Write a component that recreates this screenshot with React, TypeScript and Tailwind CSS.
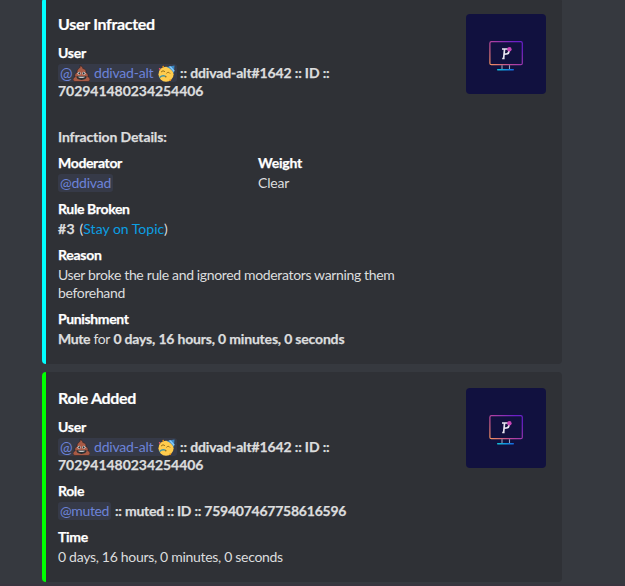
import type { ReactNode } from "react";

function PooEmoji() {
  return (
    <svg viewBox="0 0 36 36" className="block h-[17px] w-[17px]" aria-hidden="true">
      <path
        fill="#a85a45"
        stroke="#2a2020"
        strokeWidth="1.200"
        d="M31.4 25.1c.4-1 .6-2 .6-3 0-3-2-5.300-5-5.900.3-.8.4-1.600.4-2.400 0-3.500-2.700-5.900-6.500-6.300C20.600 4.500 18 1.500 14.700 1c1.300 3.300-.5 5-3 6.800-2 1.400-3.100 3.300-3.100 5.300 0 1 .2 2 .7 2.900C6 16.400 3.900 19 3.900 22c0 1.100.3 2.200.8 3.200C2 25.900 0 28 0 30.600 0 33.600 2.600 35 6 35h24c3.400 0 6-1.500 6-4.500 0-2.600-1.900-4.800-4.600-5.400z"
      />
      <circle cx="13" cy="17.500" r="3.300" fill="#f5f8fa" />
      <circle cx="23" cy="17.500" r="3.300" fill="#f5f8fa" />
      <circle cx="13.400" cy="17.800" r="2.200" fill="#292f33" />
      <circle cx="22.600" cy="17.800" r="2.200" fill="#292f33" />
      <path fill="#292f33" d="M7 24h22c0 5-4.700 7.500-11 7.500S7 29 7 24z" />
      <path fill="#f5f8fa" d="M11 25h14c0 1.400-3 2.200-7 2.200s-7-.8-7-2.200z" />
    </svg>
  );
}

function PartyEmoji() {
  return (
    <svg viewBox="0 0 36 36" className="block h-[17px] w-[17px]" aria-hidden="true">
      <circle cx="17" cy="19.500" r="16" fill="#ffcc4d" />
      <path fill="#3b88c3" d="M18 4 35 1l-1.500 17C30 10.500 25 6.500 18 4z" />
      <path fill="#88c9f9" d="m23 3.200 4-.7 7.500 8.500-.4 4.500z" />
      <path d="M7 14.500c2-2.600 5-2.800 7-.8M18.500 17c2-2.200 5-2 6.500.3" fill="none" stroke="#8a6414" strokeWidth="2" strokeLinecap="round" />
      <path d="M15 23.500c-4-1.500-8-.5-11 2.500" fill="none" stroke="#3f93a8" strokeWidth="3" strokeLinecap="round" />
      <circle cx="16.500" cy="25" r="1.700" fill="#8a6414" />
      <circle cx="3.500" cy="8" r="1.800" fill="#ea596e" />
      <circle cx="11" cy="3.500" r="1.700" fill="#f4900c" />
      <circle cx="26" cy="32" r="1.800" fill="#f4900c" />
    </svg>
  );
}

function Thumbnail({ id }: { id: string }) {
  return (
    <div className="h-20 w-20 shrink-0 overflow-hidden rounded-[4px] bg-[#11113f]">
      <svg viewBox="0 0 80 80" className="block h-20 w-20" aria-hidden="true">
        <defs>
          <linearGradient id={id + "-screen"} x1="0" y1="1" x2="1" y2="0.300">
            <stop offset="0" stopColor="#f2935c" />
            <stop offset="0.450" stopColor="#b8459c" />
            <stop offset="1" stopColor="#6a1fc9" />
          </linearGradient>
          <linearGradient id={id + "-base"} x1="0" y1="0" x2="1" y2="0">
            <stop offset="0" stopColor="#12c4dc" />
            <stop offset="1" stopColor="#1464e0" />
          </linearGradient>
        </defs>
        <rect x="23.900" y="27.700" width="32.400" height="23" rx="1.500" fill="none" stroke={`url(#${id}-screen)`} strokeWidth="1.200" />
        <path d="M36 51.300v4M43.500 51.300v4" stroke="#9ba0bd" strokeWidth="1.100" />
        <rect x="31" y="55" width="17" height="1.400" rx="0.700" fill={`url(#${id}-base)`} />
        <path d="M36 35h4.800c3.200 0 2.800 4.800-.5 5l-2 .2M38.500 35.500l-.8 8.500M36.200 44.500h2.400" fill="none" stroke="#e8e6f2" strokeWidth="1.700" />
        <circle cx="43.400" cy="35.300" r="2.200" fill="#c945b6" />
      </svg>
    </div>
  );
}

function Mention({ children }: { children: ReactNode }) {
  return (
    <span className="inline-flex h-[18px] items-center whitespace-pre rounded-[3px] bg-[#363a48] px-0.5 align-top font-normal text-[#6c83d8]">
      {children}
    </span>
  );
}

function Field({ name, children }: { name: ReactNode; children: ReactNode }) {
  return (
    <div>
      <div className="mb-0.5 text-white">{name}</div>
      <div className="text-[#dcddde]">{children}</div>
    </div>
  );
}

function UserField() {
  return (
    <Field name={<b className="tracking-[-0.24px]">User</b>}>
      <div className="flex">
        <Mention>
          <span className="w-[13px] text-[15px]">@</span>
          <PooEmoji />
          <span className="ml-1 w-16 tracking-[-0.2px]">ddivad-alt</span>
          <PartyEmoji />
        </Mention>
        <b className="ml-[3px] whitespace-nowrap tracking-[-0.14px]">:: ddivad-alt#1642 :: ID ::</b>
      </div>
      <b className="block tracking-[-0.04px]">702941480234254406</b>
    </Field>
  );
}

function Embed({ id, bar, title, children }: { id: string; bar: string; title: ReactNode; children: ReactNode }) {
  return (
    <article className={`flex w-[520px] justify-between rounded-[4px] border-l-4 bg-[#2f3136] py-4 pr-4 pl-3 [&_b]:[-webkit-text-stroke:0.25px] ${bar}`}>
      <div className="w-[392px]">
        <h2 className="-mt-px mb-[9px] text-[16px] leading-[22px] font-bold text-white [-webkit-text-stroke:0.2px]">{title}</h2>
        <div className="flex flex-col gap-2">{children}</div>
      </div>
      <Thumbnail id={id} />
    </article>
  );
}

export default function App() {
  return (
    <main className="flex h-[586px] w-[625px] flex-col overflow-hidden border-b-2 border-[#38353f] bg-[#36393f] pl-[42px] font-['Lato','Liberation_Sans',sans-serif] text-[14px] leading-[18px]">
      <div className="-mt-0.5 flex flex-col gap-2">
        <Embed id="infraction" bar="border-[#00ffff]" title={<span className="tracking-[-0.3px]">User Infracted</span>}>
          <UserField />
          <b className="mt-5 block tracking-[-0.12px] text-[#dcddde]">Infraction Details:</b>
          <div className="grid grid-cols-[200px_1fr]">
            <Field name={<b className="tracking-[-0.34px]">Moderator</b>}>
              <Mention>
                <span className="w-[51px] tracking-[-0.23px]">@ddivad</span>
              </Mention>
            </Field>
            <Field name={<b className="tracking-[-0.21px]">Weight</b>}>
              <span className="tracking-[-0.22px]">Clear</span>
            </Field>
          </div>
          <Field name={<b className="tracking-[-0.37px]">Rule Broken</b>}>
            <b className="mr-px tracking-[0.38px]">#3</b> (<span className="text-[#0b9fe3]">Stay on Topic</span>)
          </Field>
          <Field name={<b className="tracking-[-0.28px]">Reason</b>}>
            <p className="w-[345px] tracking-[-0.35px]">User broke the rule and ignored moderators warning them beforehand</p>
          </Field>
          <Field name={<b className="tracking-[-0.37px]">Punishment</b>}>
            <b className="tracking-[-0.41px]">Mute</b> <span className="tracking-[-0.5px]">for</span>{" "}
            <b className="tracking-[-0.18px]">0 days, 16 hours, 0 minutes, 0 seconds</b>
          </Field>
        </Embed>
        <Embed id="role" bar="border-[#00ff00]" title={<span className="tracking-[-0.36px]">Role Added</span>}>
          <UserField />
          <Field name={<b className="tracking-[-0.38px]">Role</b>}>
            <div className="flex">
              <Mention>
                <span className="w-[49px] tracking-[-0.37px]">@muted</span>
              </Mention>
              <b className="ml-1 whitespace-nowrap tracking-[-0.24px]">:: muted :: ID :: 759407467758616596</b>
            </div>
          </Field>
          <Field name={<b className="tracking-[-0.27px]">Time</b>}>
            <span className="tracking-[-0.3px]">0 days, 16 hours, 0 minutes, 0 seconds</span>
          </Field>
        </Embed>
      </div>
    </main>
  );
}
